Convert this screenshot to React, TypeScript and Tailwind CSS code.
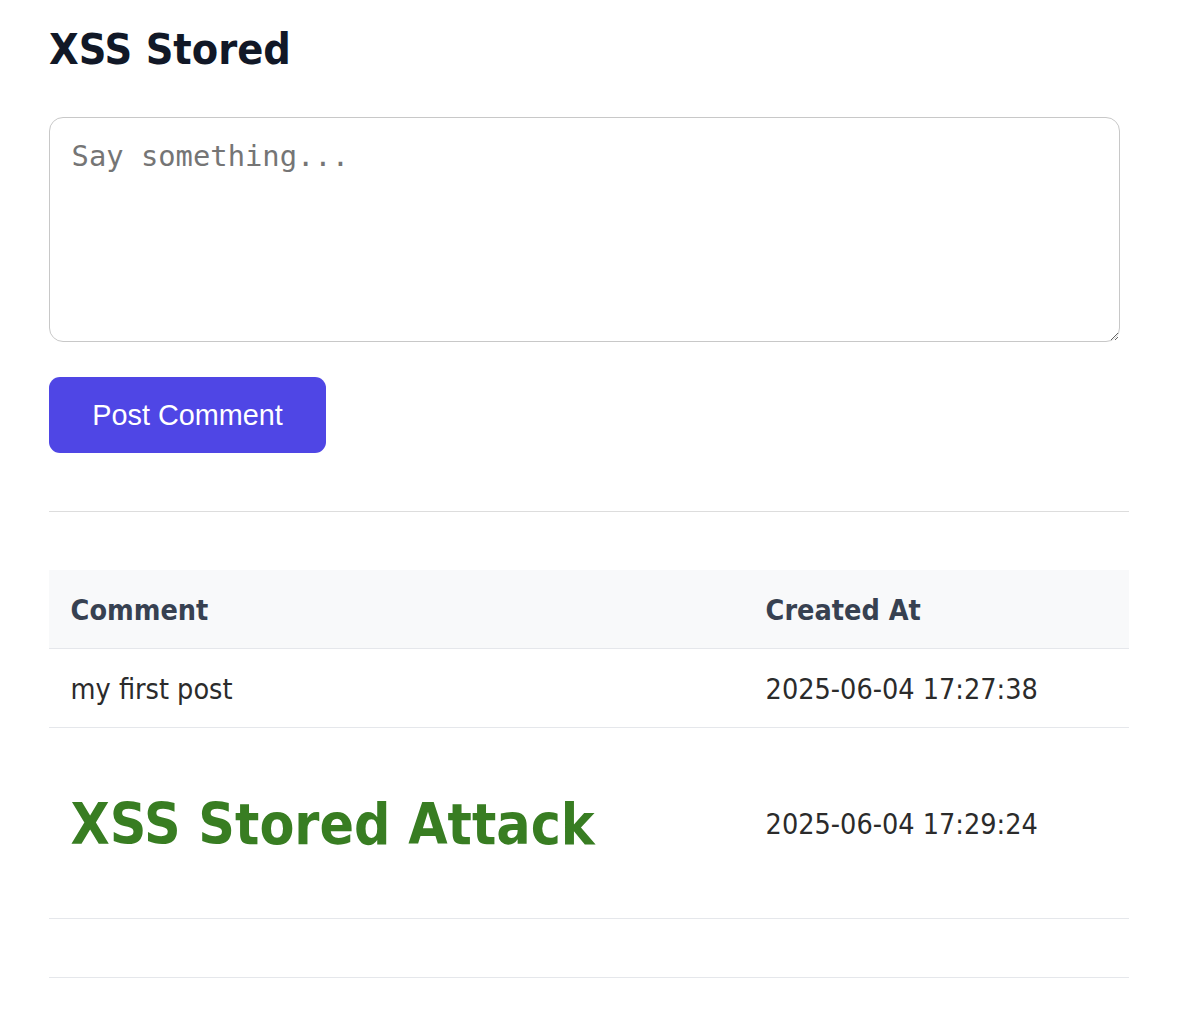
import React from "react";

const font = { fontFamily: '"DejaVu Sans Condensed", "DejaVu Sans", sans-serif' };

export default function App() {
  return (
    <div className="min-h-[1016px] bg-white px-[49px]" style={font}>
      <h1 className="mt-[24px] mb-[43px] h-[50px] text-[42.8px] leading-[50px] font-bold text-[#111827]">XSS Stored</h1>
      <textarea
        placeholder="Say something..."
        className="block w-[1071px] h-[225px] rounded-[14px] border border-[#c8c8c8] px-[21.6px] py-[21.6px] text-[28.8px] leading-[1.164] text-[#333] placeholder:text-[#757575] outline-none"
        style={{ fontFamily: '"DejaVu Sans Mono", monospace' }}
      />
      <button
        className="mt-[35px] h-[76px] w-[277px] rounded-[11px] bg-[#4f46e5] pt-[2px] text-[28.8px] text-white"
        style={{ fontFamily: '"Liberation Sans", Arial, sans-serif' }}
      >
        Post Comment
      </button>
      <div className="mt-[58px] h-px w-[1080px] bg-[#dddddd]" />
      <table className="mt-[58px] w-[1080px] border-collapse text-[28.5px] leading-[1.2]">
        <thead>
          <tr className="h-[78px] bg-[#f8f9fa] border-b border-[#e5e7eb]">
            <th className="w-[695px] px-[21.6px] pt-[4px] text-left font-bold text-[#374151]">Comment</th>
            <th className="px-[21.6px] pt-[4px] text-left font-bold text-[#374151]">Created At</th>
          </tr>
        </thead>
        <tbody className="text-[#2b2b2b]">
          <tr className="h-[79px] border-b border-[#e5e7eb]">
            <td className="px-[21.6px] pt-[5px]">my first post</td>
            <td className="px-[21.6px] pt-[5px]">2025-06-04 17:27:38</td>
          </tr>
          <tr className="h-[191px] border-b border-[#e5e7eb]">
            <td className="px-[21.6px] pt-[4px]">
              <span className="text-[56.6px] font-bold leading-[1.164] text-[#387d22]">XSS Stored Attack</span>
            </td>
            <td className="px-[21.6px] pt-[5px]">2025-06-04 17:29:24</td>
          </tr>
          <tr className="h-[59px] border-b border-[#e5e7eb]">
            <td className="px-[21.6px]"></td>
            <td className="px-[21.6px]"></td>
          </tr>
        </tbody>
      </table>
    </div>
  );
}
